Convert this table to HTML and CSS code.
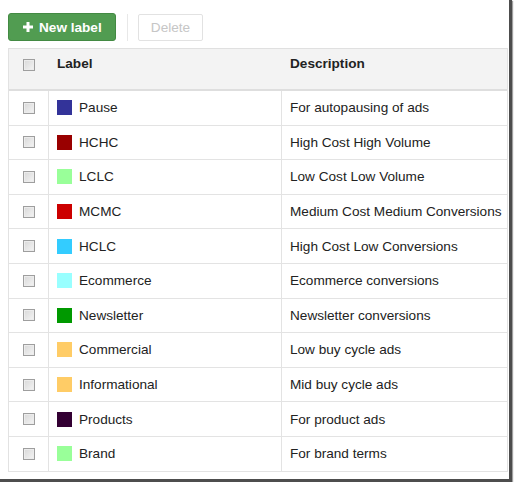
FILE: index.html
```html
<!DOCTYPE html>
<html>
<head>
<meta charset="utf-8">
<link rel="stylesheet" href="styles.css">
</head>
<body>
<div class="frame">
  <div class="toolbar">
    <button class="btn-new"><svg class="plus" width="10" height="10" viewBox="0 0 10 10"><rect x="3.5" y="0" width="3" height="10" fill="#fff"/><rect x="0" y="3.5" width="10" height="3" fill="#fff"/></svg>New label</button>
    <span class="sep"></span>
    <button class="btn-del">Delete</button>
  </div>
  <div class="table">
    <div class="thead">
      <div class="c-chk"><span class="cb"></span></div>
      <div class="c-label">Label</div>
      <div class="c-desc">Description</div>
    </div>
    <div class="row"><div class="c-chk"><span class="cb"></span></div><div class="c-label"><span class="sw" style="background:#333399"></span>Pause</div><div class="c-desc">For autopausing of ads</div></div>
    <div class="row"><div class="c-chk"><span class="cb"></span></div><div class="c-label"><span class="sw" style="background:#990000"></span>HCHC</div><div class="c-desc">High Cost High Volume</div></div>
    <div class="row"><div class="c-chk"><span class="cb"></span></div><div class="c-label"><span class="sw" style="background:#99ff99"></span>LCLC</div><div class="c-desc">Low Cost Low Volume</div></div>
    <div class="row"><div class="c-chk"><span class="cb"></span></div><div class="c-label"><span class="sw" style="background:#cc0000"></span>MCMC</div><div class="c-desc">Medium Cost Medium Conversions</div></div>
    <div class="row"><div class="c-chk"><span class="cb"></span></div><div class="c-label"><span class="sw" style="background:#33ccff"></span>HCLC</div><div class="c-desc">High Cost Low Conversions</div></div>
    <div class="row"><div class="c-chk"><span class="cb"></span></div><div class="c-label"><span class="sw" style="background:#99ffff"></span>Ecommerce</div><div class="c-desc">Ecommerce conversions</div></div>
    <div class="row"><div class="c-chk"><span class="cb"></span></div><div class="c-label"><span class="sw" style="background:#009900"></span>Newsletter</div><div class="c-desc">Newsletter conversions</div></div>
    <div class="row"><div class="c-chk"><span class="cb"></span></div><div class="c-label"><span class="sw" style="background:#ffcc66"></span>Commercial</div><div class="c-desc">Low buy cycle ads</div></div>
    <div class="row"><div class="c-chk"><span class="cb"></span></div><div class="c-label"><span class="sw" style="background:#ffcc66"></span>Informational</div><div class="c-desc">Mid buy cycle ads</div></div>
    <div class="row"><div class="c-chk"><span class="cb"></span></div><div class="c-label"><span class="sw" style="background:#330033"></span>Products</div><div class="c-desc">For product ads</div></div>
    <div class="row"><div class="c-chk"><span class="cb"></span></div><div class="c-label"><span class="sw" style="background:#99ff99"></span>Brand</div><div class="c-desc">For brand terms</div></div>
  </div>
</div>
</body>
</html>
```

FILE: styles.css
```css
html, body {
  margin: 0;
  padding: 0;
  background: #fff;
}
body {
  font-family: "Liberation Sans", Arial, sans-serif;
  font-size: 13.6px;
  color: #222;
}
.frame {
  box-sizing: border-box;
  width: 512px;
  height: 482px;
  padding: 13px 0 0 8px;
  background: #fff;
  border-right: 3px solid #4d4d4d;
  border-bottom: 3px solid #4d4d4d;
  box-shadow: 1px 1px 1px #a0a0a0;
  overflow: hidden;
}
.toolbar {
  display: flex;
  align-items: center;
  height: 28px;
}
.btn-new {
  box-sizing: border-box;
  display: flex;
  align-items: center;
  gap: 6px;
  height: 28px;
  width: 108px;
  padding: 0 0 0 14px;
  background: #519c51;
  border: 1px solid #438a43;
  border-radius: 3px;
  color: #fff;
  font-family: "Liberation Sans", Arial, sans-serif;
  font-weight: bold;
  font-size: 13.6px;
}
.plus {
  display: block;
}
.sep {
  width: 1px;
  height: 27px;
  background: #e8e8e8;
  margin: 0 10px 0 11px;
}
.btn-del {
  box-sizing: border-box;
  height: 27px;
  width: 65px;
  margin-top: 1px;
  padding: 0;
  background: #fff;
  border: 1px solid #e2e2e2;
  border-radius: 2px;
  color: #c6c6c6;
  font-family: "Liberation Sans", Arial, sans-serif;
  font-size: 13.6px;
}
.table {
  margin-top: 7px;
  width: 500px;
  border-left: 1px solid #e2e2e2;
  border-right: 1px solid #e2e2e2;
  box-sizing: border-box;
}
.thead {
  display: flex;
  box-sizing: border-box;
  height: 43px;
  background: #f3f3f3;
  border-top: 1px solid #e0e0e0;
  border-bottom: 2px solid #dedede;
  padding-top: 7px;
  font-weight: bold;
  color: #222;
}
.thead .c-chk {
  align-items: flex-start;
  padding-top: 3px;
}
.row {
  display: flex;
  box-sizing: border-box;
  height: 34.6px;
  border-bottom: 1px solid #e3e3e3;
  align-items: stretch;
}
.c-chk {
  width: 39px;
  display: flex;
  justify-content: center;
  align-items: center;
}
.c-label {
  box-sizing: border-box;
  width: 233px;
  padding-left: 8px;
  display: flex;
  align-items: center;
  gap: 7px;
}
.c-desc {
  flex: 1;
  padding-left: 8px;
  display: flex;
  align-items: center;
  white-space: nowrap;
}
.thead .c-label, .thead .c-desc {
  align-items: flex-start;
}
.row .c-label {
  border-left: 1px solid #e3e3e3;
}
.row .c-desc {
  border-left: 1px solid #e3e3e3;
}
.thead .c-label {
  padding-left: 9px;
}
.thead .c-desc {
  padding-left: 9px;
}
.cb {
  box-sizing: border-box;
  display: block;
  width: 12px;
  height: 12px;
  border: 1px solid #9e9e9e;
  background: linear-gradient(135deg, #d8d8d8, #f4f4f4);
  box-shadow: inset 0 0 0 1px #ececec;
}
.sw {
  display: block;
  width: 15px;
  height: 15px;
  flex: none;
}
```
